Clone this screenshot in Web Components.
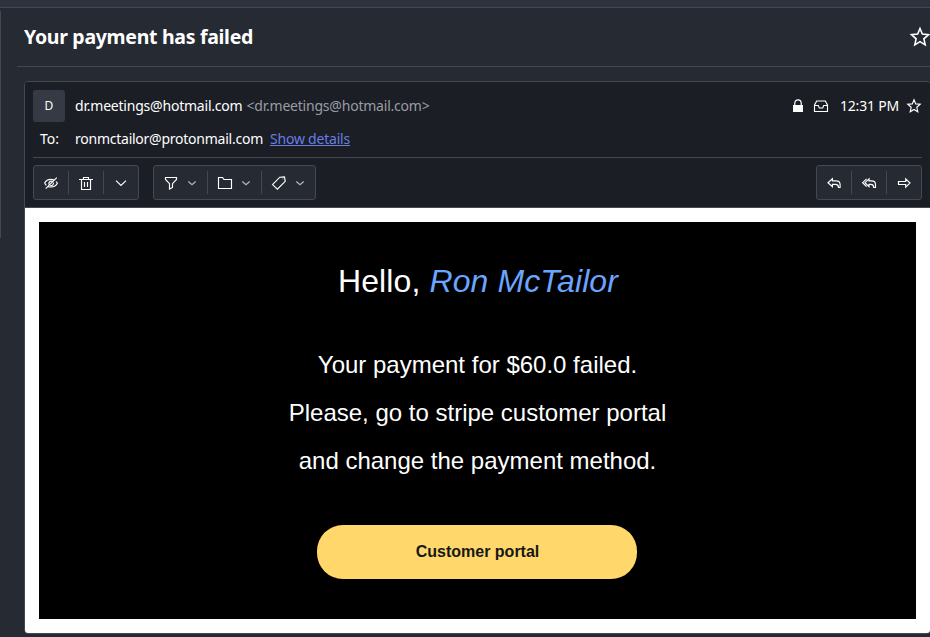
<!DOCTYPE html>
<html lang="en">
<head>
<meta charset="utf-8">
<title>Your payment has failed</title>
<style>
html,body{margin:0;height:637px;overflow:hidden;background:#262a33}
body{font-family:"Noto Sans","Open Sans",sans-serif;color:#fff;font-size:14px}
</style>
</head>
<body>
<mail-app></mail-app>
<script>
const icons = {
  eye: '<path stroke-width="1.15" d="M1.600 8.200Q3.500 4.400 8 4.400q2 0 3.300.8M13 6.500l1.400 1.700Q12.500 12 8 12q-1.700 0-3-.6M3.300 10.300L1.600 8.200M13.800 2.700L2.700 13.700M9.700 6.700A2.400 2.400 0 0 0 6 9.500M10.400 7.700A2.400 2.400 0 0 1 7.200 10.500"/>',
  trash: '<path d="M1 4.500h14M5.500 4V2.500h5V4M3.500 5v9.500h9V5M6.500 7v5M9.500 7v5"/>',
  chevron: '<path d="M3 5.700l5 4.800 5-4.800"/>',
  small: '<path d="M4.300 6.500L8 9.800l3.700-3.300"/>',
  funnel: '<path d="M2.500 2.500h11v2L9.500 8.700v3.800l-3 1.500V8.700L2.500 4.500z"/>',
  folder: '<path d="M1.500 13.500v-11h4l1.500 2h7.500v9z"/>',
  tag: '<path d="M1.500 9.600L8.800 2.200l4.700-.3.700 4.400-7.800 7.800z"/><path d="M11.600 4h.6" stroke-width=".8"/>',
  reply: '<path d="M6.400 3.800L2 7.700l4.400 3.900V9.300h3.300c1.900 0 2.800 1.200 2.800 3.200h1.600V9.700c0-2.500-1.600-3.800-4.200-3.800H6.400z"/>',
  replyall: '<path d="M8 3.800L4 7.700l4 3.900V9.300h2c1.900 0 2.700 1.200 2.700 3.200h1.800V9.700c0-2.500-1.500-3.800-4-3.800H8zM5.600 3.800l-4 3.900 4 3.900"/>',
  forward: '<path d="M2.500 6.500h7.200V3.800L14 8l-4.300 4.200V9.500H2.500z"/>',
  lock: '<path d="M4.800 7V5a3.200 3.200 0 0 1 6.400 0v2" stroke-width="1.2"/><path d="M3 7h10v7H3z" fill="currentColor" stroke="none"/>',
  inbox: '<path d="M1.500 13.500V7l2.200-4h8.600l2.200 4v6.500zM2 7.500h3.300l1 2.500h3.400l1-2.500H14"/>',
  star: '<path d="M8 1.800l1.700 4.100 4.500.4-3.400 3 1 4.400L8 11.400l-3.800 2.300 1-4.400-3.400-3 4.500-.4z"/>'
};
function define(name, render, ready) {
  customElements.define(name, class extends HTMLElement {
    connectedCallback() {
      if (this.shadowRoot) return;
      this.attachShadow({mode: 'open'}).innerHTML = render(this);
      if (ready) ready(this);
    }
  });
}
/* Single line of text whose tracking fills the given advance width. */
define('fit-text', () => '<style>:host{display:inline-block;white-space:nowrap}span{display:inline-block;text-decoration:inherit}</style><span><slot></slot></span>', el => {
  const want = parseFloat(el.getAttribute('width'));
  const span = el.shadowRoot.querySelector('span');
  const n = el.textContent.length;
  el.style.width = want + 'px';
  span.style.letterSpacing = (want - span.getBoundingClientRect().width) / n + 'px';
});
define('ui-icon', el => {
  const s = el.getAttribute('size') || 16;
  return `<style>:host{display:block;flex:none;width:${s}px;height:${s}px}svg{display:block;width:100%;height:100%;fill:none;stroke:currentColor;stroke-width:1.15}</style><svg viewBox="0 0 16 16">${icons[el.getAttribute('name')]}</svg>`;
});
define('tool-group', () => `<style>
:host{display:flex;box-sizing:border-box;height:35px;border:1px solid #444853;border-radius:3px;background:#262a33;padding:5px 0}
</style><slot></slot>`);
define('tool-button', el => `<style>
:host{display:flex;box-sizing:border-box;width:${el.hasAttribute('menu') ? 53 : 34}px;padding:4px 0 0 9px;gap:5px;height:23px}
:host(:not(:first-child)){border-left:1px solid #444853;width:${el.hasAttribute('menu') ? 54 : 35}px}
.s{color:#b4b7bf}
</style><ui-icon name="${el.getAttribute('icon')}"></ui-icon>${el.hasAttribute('menu') ? '<ui-icon class="s" name="small"></ui-icon>' : ''}`);
define('mail-title', () => `<style>
:host{display:flex;align-items:center;box-sizing:border-box;margin-left:17px;height:59px;padding:0 0 0 7px;border-bottom:1px solid #444853}
h1{margin:0;font-size:19.5px;line-height:28px;font-weight:700;flex:1}
ui-icon{margin-right:-1px}
</style><h1><slot></slot></h1><ui-icon name="star" size="22"></ui-icon>`);
define('mail-header', () => `<style>
:host{display:block;box-sizing:border-box;height:126px;padding:8px 8px 0;background:#1b1e25;border-bottom:1px solid #444853}
.row{display:flex;align-items:center;height:32px}
.row>fit-text,.meta fit-text{line-height:20px}
.av{box-sizing:border-box;width:32px;height:32px;padding-bottom:2px;background:#363a45;border-radius:3px;font-size:12px;display:flex;align-items:center;justify-content:center;margin-right:10px}
.mail{color:#999ca5;margin-left:4px}
.meta{margin-left:auto;display:flex;align-items:center}
.row.to{height:36px;border-bottom:1px solid #444853;box-sizing:border-box;align-items:flex-start;line-height:34px}
.row.to>fit-text{line-height:34px}
.to b{font-weight:400;width:35px;padding-left:7px}
.link{color:#657ee4;text-decoration:underline;margin-left:7px}
.bar{display:flex;margin-top:7px;gap:14px}
.end{margin-left:auto}
</style>
<div class="row"><div class="av">D</div><fit-text width="167.5">dr.meetings@hotmail.com</fit-text><fit-text class="mail" width="183">&lt;dr.meetings@hotmail.com&gt;</fit-text>
<div class="meta"><ui-icon name="lock"></ui-icon><ui-icon name="inbox" style="margin-left:7px"></ui-icon><fit-text width="59" style="margin:0 7px 0 11px">12:31 PM</fit-text><ui-icon name="star"></ui-icon></div></div>
<div class="row to"><b><fit-text width="19">To:</fit-text></b><fit-text width="188">ronmctailor@protonmail.com</fit-text><fit-text class="link" width="80">Show details</fit-text></div>
<div class="bar">
<tool-group><tool-button icon="eye"></tool-button><tool-button icon="trash"></tool-button><tool-button icon="chevron"></tool-button></tool-group>
<tool-group><tool-button icon="funnel" menu></tool-button><tool-button icon="folder" menu></tool-button><tool-button icon="tag" menu></tool-button></tool-group>
<tool-group class="end"><tool-button icon="reply"></tool-button><tool-button icon="replyall"></tool-button><tool-button icon="forward"></tool-button></tool-group>
</div>`);
define('mail-body', () => `<style>
:host{display:block;background:#fff;padding:14px;height:397px}
.in{box-sizing:border-box;background:#000;height:397px;width:877px;padding-top:35px;display:flex;flex-direction:column;align-items:center;font-family:"Liberation Sans",Arial,sans-serif}
h2{margin:0 0 36px 1px;font-size:32px;line-height:48px;font-weight:400}
h2 fit-text{vertical-align:top}
em{color:#6aa5ff}
p{margin:0;font-size:24px;line-height:48px}
.btn{box-sizing:border-box;margin:40px 1px 0 0;padding-left:1px;width:320px;height:54px;border-radius:26px;background:#ffd76a;color:#15171a;font-weight:700;font-size:16px;line-height:54px;text-align:center}
</style><div class="in"><h2><fit-text width="280">Hello, <em>Ron McTailor</em></fit-text></h2><p>Your payment for $60.0 failed.</p><p>Please, go to stripe customer portal</p><p>and change the payment method.</p><div class="btn">Customer portal</div></div>`);
define('mail-app', () => `<style>
:host{display:block;position:relative;width:930px;height:637px;overflow:hidden}
.top{height:7px;background:#2f323d;border-bottom:1px solid #444853}
.edge{position:absolute;left:0;top:11px;width:1px;height:227px;background:#444853}
.card{box-sizing:border-box;margin:14px 0 0 24px;width:907px;height:553px;border:1px solid #444853;border-radius:4px;overflow:hidden}
</style><div class="top"></div><div class="edge"></div>
<mail-title><fit-text width="229">Your payment has failed</fit-text></mail-title>
<div class="card"><mail-header></mail-header><mail-body></mail-body></div>`);
</script>
</body>
</html>
